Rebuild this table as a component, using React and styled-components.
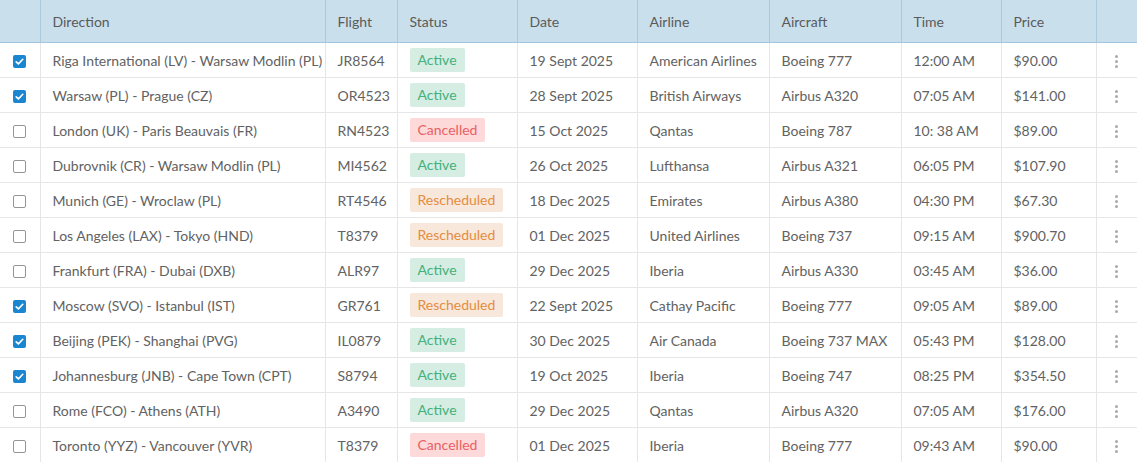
import React from "react";
import styled, { createGlobalStyle } from "styled-components";

const Global = createGlobalStyle`
  html, body { margin: 0; padding: 0; background: #fff; }
  body { font-family: "Lato", "Open Sans", sans-serif; }
`;

const rows = [
  ["Riga International (LV) - Warsaw Modlin (PL)", "JR8564", "Active", "19 Sept 2025", "American Airlines", "Boeing 777", "12:00 AM", "$90.00", true],
  ["Warsaw (PL) - Prague (CZ)", "OR4523", "Active", "28 Sept 2025", "British Airways", "Airbus A320", "07:05 AM", "$141.00", true],
  ["London (UK) - Paris Beauvais (FR)", "RN4523", "Cancelled", "15 Oct 2025", "Qantas", "Boeing 787", "10: 38 AM", "$89.00", false],
  ["Dubrovnik (CR) - Warsaw Modlin (PL)", "MI4562", "Active", "26 Oct 2025", "Lufthansa", "Airbus A321", "06:05 PM", "$107.90", false],
  ["Munich (GE) - Wroclaw (PL)", "RT4546", "Rescheduled", "18 Dec 2025", "Emirates", "Airbus A380", "04:30 PM", "$67.30", false],
  ["Los Angeles (LAX) - Tokyo (HND)", "T8379", "Rescheduled", "01 Dec 2025", "United Airlines", "Boeing 737", "09:15 AM", "$900.70", false],
  ["Frankfurt (FRA) - Dubai (DXB)", "ALR97", "Active", "29 Dec 2025", "Iberia", "Airbus A330", "03:45 AM", "$36.00", false],
  ["Moscow (SVO) - Istanbul (IST)", "GR761", "Rescheduled", "22 Sept 2025", "Cathay Pacific", "Boeing 777", "09:05 AM", "$89.00", true],
  ["Beijing (PEK) - Shanghai (PVG)", "IL0879", "Active", "30 Dec 2025", "Air Canada", "Boeing 737 MAX", "05:43 PM", "$128.00", true],
  ["Johannesburg (JNB) - Cape Town (CPT)", "S8794", "Active", "19 Oct 2025", "Iberia", "Boeing 747", "08:25 PM", "$354.50", true],
  ["Rome (FCO) - Athens (ATH)", "A3490", "Active", "29 Dec 2025", "Qantas", "Airbus A320", "07:05 AM", "$176.00", false],
  ["Toronto (YYZ) - Vancouver (YVR)", "T8379", "Cancelled", "01 Dec 2025", "Iberia", "Boeing 777", "09:43 AM", "$90.00", false],
];

const widths = [40, 285, 72, 120, 120, 132, 132, 100, 95, 41];
const headers = ["", "Direction", "Flight", "Status", "Date", "Airline", "Aircraft", "Time", "Price", ""];

const statusColors = {
  Active: { bg: "#d5ede2", fg: "#44b07c" },
  Cancelled: { bg: "#fdd9da", fg: "#ea6062" },
  Rescheduled: { bg: "#f8e8db", fg: "#e48c40" },
};

const Table = styled.table`
  width: 1137px;
  table-layout: fixed;
  border-collapse: collapse;
  font-size: 14px;
  color: #626262;
`;

const HeadCell = styled.th`
  height: 42px;
  padding: 0 12px;
  text-align: left;
  font-weight: 400;
  background: #c9dfec;
  color: #5a5a5a;
  border-left: 1px solid #a9c9df;
  border-bottom: 1px solid #a2c4dc;
  &:first-child { border-left: none; }
`;

const Row = styled.tr`
  height: 35px;
`;

const Cell = styled.td`
  padding: 0 12px;
  height: 34px;
  border-left: 1px solid #e6e6e6;
  border-bottom: 1px solid #e6e6e6;
  white-space: nowrap;
  &:first-child { border-left: none; }
  text-align: ${(p) => (p.$center ? "center" : "left")};
`;

const Check = styled.span`
  display: inline-block;
  box-sizing: border-box;
  width: 13px;
  height: 13px;
  border-radius: 2px;
  vertical-align: middle;
  border: ${(p) => (p.$on ? "none" : "1px solid #959595")};
  background: ${(p) => (p.$on ? "#1a86d0" : "#fff")};
  position: relative;
  svg { position: absolute; left: 0; top: 0; }
`;

const Badge = styled.span`
  display: inline-block;
  padding: 0 8px;
  line-height: 24px;
  border-radius: 2px;
  background: ${(p) => statusColors[p.$s].bg};
  color: ${(p) => statusColors[p.$s].fg};
`;

const Kebab = styled.span`
  display: inline-flex;
  flex-direction: column;
  gap: 2px;
  vertical-align: middle;
  span {
    width: 3px;
    height: 3px;
    border-radius: 50%;
    background: #a9a9a9;
  }
`;

export default function App() {
  return (
    <>
      <Global />
      <Table>
        <colgroup>
          {widths.map((w, i) => (
            <col key={i} style={{ width: w }} />
          ))}
        </colgroup>
        <thead>
          <tr>
            {headers.map((h, i) => (
              <HeadCell key={i}>{h}</HeadCell>
            ))}
          </tr>
        </thead>
        <tbody>
          {rows.map((r, i) => (
            <Row key={i}>
              <Cell $center>
                <Check $on={r[8]}>
                  {r[8] && (
                    <svg width="13" height="13" viewBox="0 0 13 13">
                      <path d="M3.2 6.8 L5.4 8.9 L9.8 4.3" fill="none" stroke="#fff" strokeWidth="1.6" strokeLinecap="round" strokeLinejoin="round" />
                    </svg>
                  )}
                </Check>
              </Cell>
              <Cell>{r[0]}</Cell>
              <Cell>{r[1]}</Cell>
              <Cell>
                <Badge $s={r[2]}>{r[2]}</Badge>
              </Cell>
              <Cell>{r[3]}</Cell>
              <Cell>{r[4]}</Cell>
              <Cell>{r[5]}</Cell>
              <Cell>{r[6]}</Cell>
              <Cell>{r[7]}</Cell>
              <Cell $center>
                <Kebab>
                  <span />
                  <span />
                  <span />
                </Kebab>
              </Cell>
            </Row>
          ))}
        </tbody>
      </Table>
    </>
  );
}
